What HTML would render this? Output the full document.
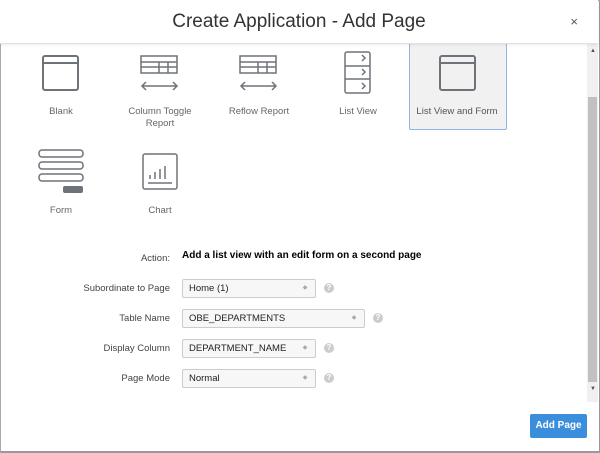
<!DOCTYPE html><html><head><style>
body{margin:0;width:600px;height:452px;overflow:hidden;font-family:"Liberation Sans",sans-serif;background:#fff}
.frame{position:absolute;left:0;top:0;width:598px;height:450px;border:1px solid #aaa;border-right:2px solid #999;border-bottom:2px solid #999}
.hdr{position:absolute;left:0;top:0;width:598px;height:43px;border-bottom:1px solid #e2e2e2;box-shadow:0 1px 3px rgba(0,0,0,.08);background:#fff;z-index:2}
.hdr h1{margin:0;font-weight:normal;font-size:19px;color:#333;text-align:center;line-height:43px}
.x{position:absolute;right:20px;top:14px;font-size:13px;color:#555}
.item{position:absolute;width:96px;text-align:center;font-size:9.5px;color:#666;line-height:12px}
.sel{background:#f1f1f1;border:1px solid #8fb6e6;border-radius:2px}
svg{position:absolute}
.lab{position:absolute;font-size:9.5px;color:#444;text-align:right;width:110px;left:60px}
.sb{position:absolute;left:182px;height:19px;border:1px solid #ccc;border-radius:2px;background:#f7f7f7;font-size:9.5px;color:#222;line-height:18px;padding-left:6px;box-sizing:border-box}
.sb i{position:absolute;right:0;top:0;width:20px;height:17px;font-style:normal;font-size:6px;color:#aaa;text-align:center;line-height:17px}
.q{position:absolute;width:10px;height:10px;border-radius:50%;background:#ccc;color:#fff;font-size:8px;text-align:center;line-height:10px;font-weight:bold}
</style></head><body>
<div class="frame"></div>
<div class="hdr"><h1>Create Application - Add Page</h1><span class="x">×</span></div>
<div style="position:absolute;left:587px;top:44px;width:11px;height:358px;background:#f0f0f0"></div>
<div style="position:absolute;left:588px;top:97px;width:9px;height:285px;background:#c1c1c1"></div>
<div style="position:absolute;left:590px;top:48px;font-size:6px;color:#555">▲</div>
<div style="position:absolute;left:590px;top:386px;font-size:6px;color:#555">▼</div>
<div class="item sel" style="left:409px;top:43px;height:85px"></div>
<svg width="600" height="230" style="left:0;top:0" fill="none" stroke="#6e737a" stroke-width="2">
<rect x="43" y="56" width="35" height="34" rx="2"/><line x1="43" y1="63" x2="78" y2="63"/>
<rect x="440" y="56" width="35" height="34" rx="2"/><line x1="440" y1="63" x2="475" y2="63"/>
<g stroke-width="1.5"><rect x="141" y="56" width="36" height="17"/><line x1="141" y1="62" x2="177" y2="62"/><line x1="141" y1="67" x2="177" y2="67"/><line x1="159" y1="62" x2="159" y2="73"/><line x1="168" y1="62" x2="168" y2="73"/>
<path d="M142 86h35M146 82l-4 4 4 4M173 82l4 4-4 4"/>
<rect x="240" y="56" width="36" height="17"/><line x1="240" y1="62" x2="276" y2="62"/><line x1="240" y1="67" x2="276" y2="67"/><line x1="258" y1="62" x2="258" y2="73"/><line x1="267" y1="62" x2="267" y2="73"/>
<path d="M241 86h35M245 82l-4 4 4 4M272 82l4 4-4 4"/>
<rect x="345" y="52" width="25" height="41" rx="2"/><line x1="345" y1="66" x2="370" y2="66"/><line x1="345" y1="79" x2="370" y2="79"/>
<path d="M362 55l3 3-3 3M362 69l3 3-3 3M362 83l3 3-3 3"/>
<rect x="143" y="154" width="34" height="35" rx="2"/><path d="M148 183h24M150 179v-4M155 179v-7M160 179v-10M165 179v-13"/></g>
<rect x="39" y="150" width="44" height="7" rx="3" stroke-width="1.5"/><rect x="39" y="162" width="44" height="7" rx="3" stroke-width="1.5"/><rect x="39" y="174" width="44" height="7" rx="3" stroke-width="1.5"/>
<rect x="63" y="186" width="20" height="7" rx="2" fill="#6e737a" stroke="none"/>
</svg>
<div class="item" style="left:13px;top:106px">Blank</div>
<div class="item" style="left:112px;top:106px">Column Toggle<br>Report</div>
<div class="item" style="left:211px;top:106px">Reflow Report</div>
<div class="item" style="left:310px;top:106px">List View</div>
<div class="item" style="left:409px;top:106px;color:#555">List View and Form</div>
<div class="item" style="left:13px;top:205px">Form</div>
<div class="item" style="left:112px;top:205px">Chart</div>
<div class="lab" style="top:253px">Action:</div>
<div style="position:absolute;left:182px;top:250px;font-size:10px;font-weight:bold;color:#000">Add a list view with an edit form on a second page</div>
<div class="lab" style="top:283px">Subordinate to Page</div>
<div class="sb" style="top:279px;width:134px">Home (1)<i>◆</i></div><div class="q" style="left:324px;top:283px">?</div>
<div class="lab" style="top:313px">Table Name</div>
<div class="sb" style="top:309px;width:183px">OBE_DEPARTMENTS<i>◆</i></div><div class="q" style="left:373px;top:313px">?</div>
<div class="lab" style="top:343px">Display Column</div>
<div class="sb" style="top:339px;width:134px">DEPARTMENT_NAME<i>◆</i></div><div class="q" style="left:324px;top:343px">?</div>
<div class="lab" style="top:373px">Page Mode</div>
<div class="sb" style="top:369px;width:134px">Normal<i>◆</i></div><div class="q" style="left:324px;top:373px">?</div>
<div style="position:absolute;left:530px;top:414px;width:57px;height:24px;background:#3b8edb;border-radius:2px;color:#fff;font-size:10px;font-weight:bold;text-align:center;line-height:24px">Add Page</div>
</body></html>
